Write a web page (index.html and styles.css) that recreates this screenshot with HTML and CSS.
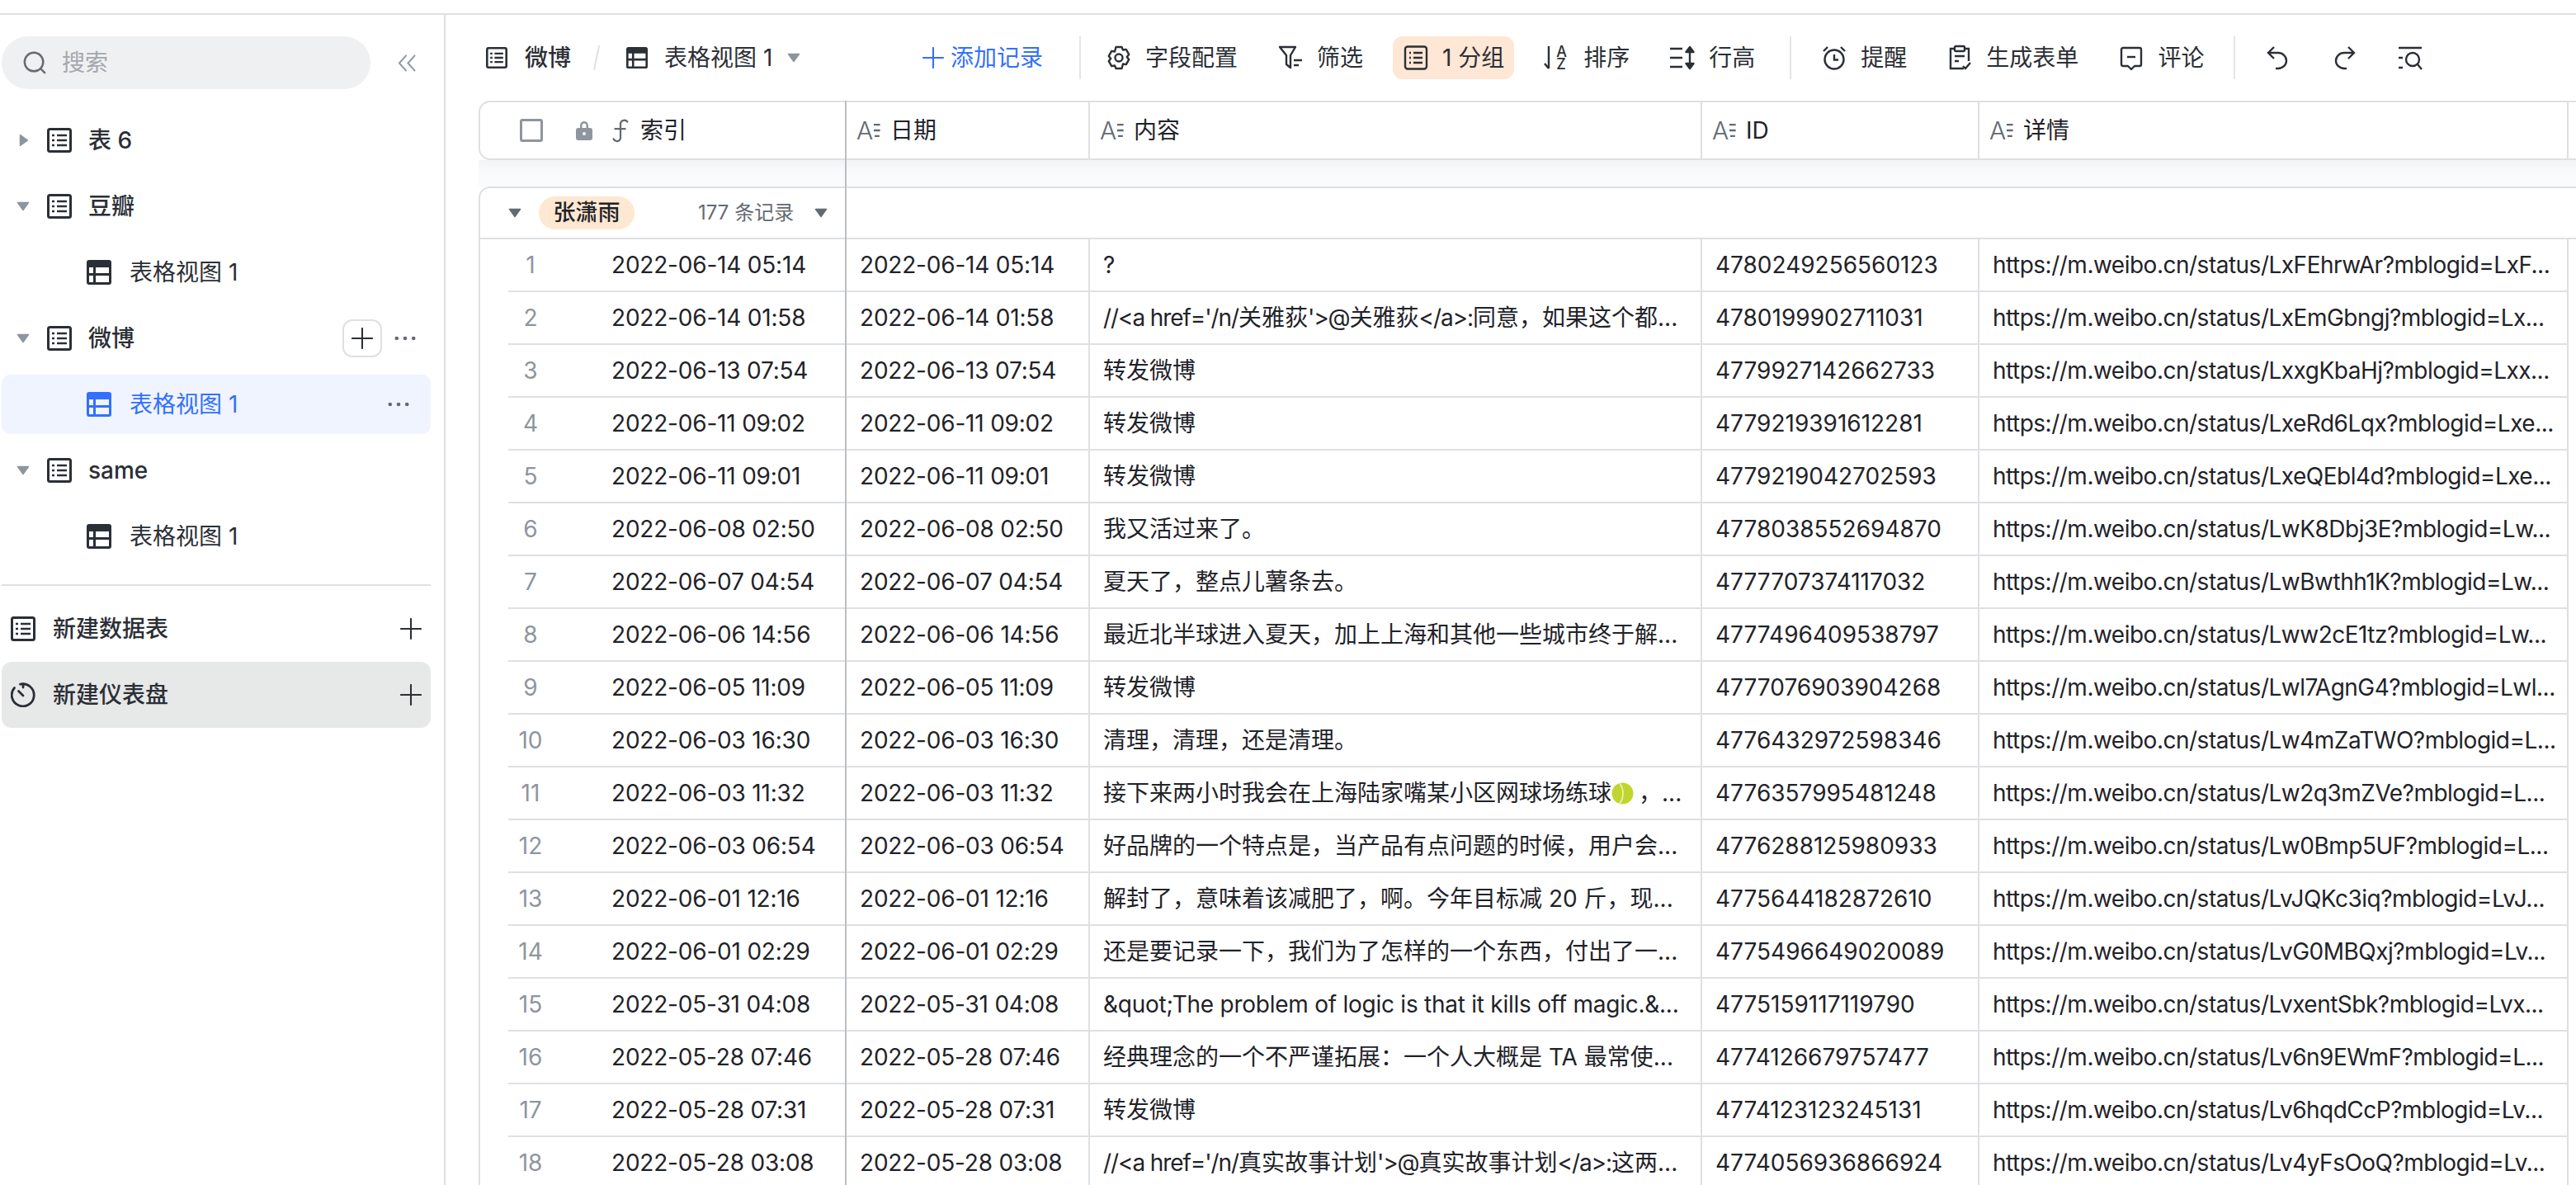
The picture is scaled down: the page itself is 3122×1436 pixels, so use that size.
FILE: index.html
```html
<!DOCTYPE html>
<html lang="zh-CN">
<head>
    <meta charset="UTF-8">
    <title>微博 - 表格视图 1</title>
    <link rel="stylesheet" href="styles.css">
</head>
<body>

    <!-- Icon sprite -->
    <svg class="sprite" xmlns="http://www.w3.org/2000/svg">
        <symbol id="i-sheet" viewBox="0 0 30 30">
            <rect x="1.5" y="1.5" width="27" height="27" rx="2" fill="none" stroke="currentColor" stroke-width="3"/>
            <path d="M6 9h3M12 9h12M6 15h3M12 15h12M6 21h3M12 21h12" stroke="currentColor" stroke-width="2.6" fill="none"/>
        </symbol>
        <symbol id="i-view" viewBox="0 0 30 30">
            <path fill="currentColor" fill-rule="evenodd" d="M3 0h24a3 3 0 0 1 3 3v24a3 3 0 0 1-3 3H3a3 3 0 0 1-3-3V3a3 3 0 0 1 3-3zM3 9v7h5V9zM11 9v7h16V9zM3 19v8h5v-8zM11 19v8h16v-8z"/>
        </symbol>
        <symbol id="i-search" viewBox="0 0 32 32">
            <circle cx="15" cy="15" r="12" fill="none" stroke="currentColor" stroke-width="2.6"/>
            <path d="M24 24l5 5" stroke="currentColor" stroke-width="2.6" stroke-linecap="round"/>
        </symbol>
        <symbol id="i-collapse" viewBox="0 0 24 24">
            <path d="M11 2L2 12l9 10M22 2l-9 10 9 10" fill="none" stroke="currentColor" stroke-width="2"/>
        </symbol>
        <symbol id="i-down" viewBox="0 0 16 12">
            <path d="M1.5 1.5h13L8 10.5z" fill="currentColor" stroke="currentColor" stroke-width="1.5" stroke-linejoin="round"/>
        </symbol>
        <symbol id="i-right" viewBox="0 0 12 16">
            <path d="M1.5 1.5v13l9-6.5z" fill="currentColor" stroke="currentColor" stroke-width="1.5" stroke-linejoin="round"/>
        </symbol>
        <symbol id="i-plus" viewBox="0 0 28 28">
            <path d="M14 1v26M1 14h26" stroke="currentColor" stroke-width="2.2" fill="none" stroke-linecap="round"/>
        </symbol>
        <symbol id="i-more" viewBox="0 0 28 6">
            <circle cx="3" cy="3" r="2.5" fill="currentColor"/>
            <circle cx="14" cy="3" r="2.5" fill="currentColor"/>
            <circle cx="25" cy="3" r="2.5" fill="currentColor"/>
        </symbol>
        <symbol id="i-gauge" viewBox="0 0 30 30">
            <path d="M11.5 2.2A13.5 13.5 0 1 1 4.5 6.5" fill="none" stroke="currentColor" stroke-width="2.8" stroke-linecap="round"/>
            <path d="M15 2v4M9.5 10.500l5.500 5.500" stroke="currentColor" stroke-width="2.8" stroke-linecap="round" fill="none"/>
        </symbol>
        <symbol id="i-gear" viewBox="0 0 32 32">
            <path d="M12.5 3h7L21 6.5l3.800-.6 3.400 6-2.400 3.100 2.400 3.100-3.400 6-3.800-.6L19.500 29h-7L11 25.500l-3.800.6-3.400-6L6.200 17 3.800 13.900l3.400-6 3.800.6z" fill="none" stroke="currentColor" stroke-width="2.4" stroke-linejoin="round"/>
            <circle cx="16" cy="16" r="4.5" fill="none" stroke="currentColor" stroke-width="2.4"/>
        </symbol>
        <symbol id="i-filter" viewBox="0 0 32 32">
            <path d="M3 3h19l-6 10v15l-5-4V13z" fill="none" stroke="currentColor" stroke-width="2.4" stroke-linejoin="round"/>
            <path d="M20 19h10M20 25h6" stroke="currentColor" stroke-width="2.4" fill="none"/>
        </symbol>
        <symbol id="i-group" viewBox="0 0 32 32">
            <rect x="3" y="2.5" width="26" height="27" rx="3" fill="none" stroke="currentColor" stroke-width="2.4"/>
            <path d="M8 10h2M13 10h11M8 16h2M13 16h11M8 22h2M13 22h11" stroke="currentColor" stroke-width="2.4" fill="none"/>
        </symbol>
        <symbol id="i-sortarrow" viewBox="0 0 10 30">
            <path d="M6 1v27M1 22l5 6" stroke="currentColor" stroke-width="2.4" fill="none"/>
        </symbol>
        <symbol id="i-rowh" viewBox="0 0 32 32">
            <path d="M1 5h15M1 16h15M1 27h15" stroke="currentColor" stroke-width="2.6" fill="none"/>
            <path d="M25 4v24M20.500 9L25 3l4.500 6zM20.500 23L25 29l4.500-6z" stroke="currentColor" stroke-width="2.4" fill="currentColor" stroke-linejoin="round"/>
        </symbol>
        <symbol id="i-alarm" viewBox="0 0 32 32">
            <circle cx="16" cy="18" r="11.5" fill="none" stroke="currentColor" stroke-width="2.4"/>
            <path d="M16 12v6.500h5M3 8l5-5M29 8l-5-5" stroke="currentColor" stroke-width="2.4" fill="none"/>
        </symbol>
        <symbol id="i-form" viewBox="0 0 32 32">
            <path d="M21 29H5V5h5M22 5h5v15" fill="none" stroke="currentColor" stroke-width="2.4"/>
            <rect x="10" y="2" width="12" height="6" rx="1.5" fill="none" stroke="currentColor" stroke-width="2.4"/>
            <path d="M10 14h12M10 20h5M20 26l3 3 6-7" stroke="currentColor" stroke-width="2.4" fill="none"/>
        </symbol>
        <symbol id="i-comment" viewBox="0 0 32 32">
            <path d="M6 4h20a2 2 0 0 1 2 2v18a2 2 0 0 1-2 2h-6l-4 4-4-4H6a2 2 0 0 1-2-2V6a2 2 0 0 1 2-2z" fill="none" stroke="currentColor" stroke-width="2.4" stroke-linejoin="round"/>
            <path d="M11 15h10" stroke="currentColor" stroke-width="2.4"/>
        </symbol>
        <symbol id="i-undo" viewBox="0 0 32 32">
            <path d="M11 3L4 10l7 7M5 10h11a10 9.500 0 0 1 0 19h-3" fill="none" stroke="currentColor" stroke-width="2.4"/>
        </symbol>
        <symbol id="i-redo" viewBox="0 0 32 32">
            <path d="M21 3l7 7-7 7M27 10H16a10 9.500 0 0 0 0 19h3" fill="none" stroke="currentColor" stroke-width="2.4"/>
        </symbol>
        <symbol id="i-find" viewBox="0 0 32 32">
            <path d="M2 4h28M2 16h5M2 28h5" stroke="currentColor" stroke-width="2.6" fill="none"/>
            <circle cx="19" cy="18" r="8" fill="none" stroke="currentColor" stroke-width="2.4"/>
            <path d="M25 24l5 6" stroke="currentColor" stroke-width="2.4"/>
        </symbol>
        <symbol id="i-lock" viewBox="0 0 20 24">
            <path fill-rule="evenodd" fill="currentColor" d="M5 9V6a5 5 0 0 1 10 0v3h2a3 3 0 0 1 3 3v9a3 3 0 0 1-3 3H3a3 3 0 0 1-3-3v-9a3 3 0 0 1 3-3zM7.500 9h5V6a2.500 2.500 0 0 0-5 0zM10 14a2 2 0 1 0 0 4 2 2 0 0 0 0-4z"/>
        </symbol>
        <symbol id="i-formula" viewBox="0 0 24 32">
            <path d="M21 5c-2-3-8-3-9 2v19c-1 5-7 5-9 1M5 14h13" fill="none" stroke="currentColor" stroke-width="2.4" stroke-linecap="round"/>
        </symbol>
        <symbol id="i-dashes" viewBox="0 0 8 20">
            <path d="M0 3h8M0 10h8M1 17h6" stroke="currentColor" stroke-width="2.4" fill="none"/>
        </symbol>
    </svg>

    <div class="topline"></div>

    <div class="app">
        <aside class="sidebar">
            <div class="search-row">
                <div class="search">
                    <svg class="ic-search"><use href="#i-search"/></svg>
                    <span>搜索</span>
                </div>
                <svg class="ic-collapse"><use href="#i-collapse"/></svg>
            </div>

            <div class="tree">
                <div class="node">
                    <svg class="caret-right"><use href="#i-right"/></svg>
                    <svg class="ic30"><use href="#i-sheet"/></svg>
                    <span class="node-name">表 6</span>
                </div>
                <div class="node">
                    <svg class="caret"><use href="#i-down"/></svg>
                    <svg class="ic30"><use href="#i-sheet"/></svg>
                    <span class="node-name">豆瓣</span>
                </div>
                <div class="node node-view">
                    <svg class="ic30"><use href="#i-view"/></svg>
                    <span>表格视图 1</span>
                </div>
                <div class="node">
                    <svg class="caret"><use href="#i-down"/></svg>
                    <svg class="ic30"><use href="#i-sheet"/></svg>
                    <span class="node-name">微博</span>
                    <div class="node-actions">
                        <span class="add-btn"><svg class="ic26"><use href="#i-plus"/></svg></span>
                        <svg class="ic-more"><use href="#i-more"/></svg>
                    </div>
                </div>
                <div class="node node-view is-active">
                    <svg class="ic30"><use href="#i-view"/></svg>
                    <span>表格视图 1</span>
                    <svg class="ic-more ic-more-active"><use href="#i-more"/></svg>
                </div>
                <div class="node">
                    <svg class="caret"><use href="#i-down"/></svg>
                    <svg class="ic30"><use href="#i-sheet"/></svg>
                    <span class="node-name">same</span>
                </div>
                <div class="node node-view">
                    <svg class="ic30"><use href="#i-view"/></svg>
                    <span>表格视图 1</span>
                </div>
            </div>

            <div class="new-list">
                <div class="new-item">
                    <svg class="ic30"><use href="#i-sheet"/></svg>
                    <span>新建数据表</span>
                    <svg class="ic26 new-plus"><use href="#i-plus"/></svg>
                </div>
                <div class="new-item is-hover">
                    <svg class="ic30"><use href="#i-gauge"/></svg>
                    <span>新建仪表盘</span>
                    <svg class="ic26 new-plus"><use href="#i-plus"/></svg>
                </div>
            </div>
        </aside>

        <main class="main">
            <div class="toolbar">
                <div class="crumbs">
                    <svg class="ic26"><use href="#i-sheet"/></svg>
                    <span class="crumb-name">微博</span>
                    <span class="crumb-slash"></span>
                    <svg class="ic26"><use href="#i-view"/></svg>
                    <span class="crumb-view">表格视图 1</span>
                    <svg class="crumb-caret"><use href="#i-down"/></svg>
                </div>
                <div class="tool tool-add">
                    <svg class="ic26"><use href="#i-plus"/></svg>
                    <span>添加记录</span>
                </div>
                <span class="sep sep-first"></span>
                <div class="tool"><svg class="ic32"><use href="#i-gear"/></svg><span>字段配置</span></div>
                <div class="tool"><svg class="ic32"><use href="#i-filter"/></svg><span>筛选</span></div>
                <div class="tool tool-on"><svg class="ic32"><use href="#i-group"/></svg><span>1 分组</span></div>
                <div class="tool">
                    <span class="sort-icon">
                        <svg class="sort-arrow"><use href="#i-sortarrow"/></svg>
                        <span class="sort-letters"><span>A</span><span>Z</span></span>
                    </span>
                    <span>排序</span>
                </div>
                <div class="tool"><svg class="ic32"><use href="#i-rowh"/></svg><span>行高</span></div>
                <span class="sep sep-mid"></span>
                <div class="tool"><svg class="ic32"><use href="#i-alarm"/></svg><span>提醒</span></div>
                <div class="tool"><svg class="ic32"><use href="#i-form"/></svg><span>生成表单</span></div>
                <div class="tool"><svg class="ic32"><use href="#i-comment"/></svg><span>评论</span></div>
                <span class="sep"></span>
                <div class="tool-icons">
                    <svg class="ic32"><use href="#i-undo"/></svg>
                    <svg class="ic32"><use href="#i-redo"/></svg>
                    <svg class="ic32"><use href="#i-find"/></svg>
                </div>
            </div>

            <div class="grid">
                <div class="freeze-line"></div>

                <div class="head cols">
                    <div class="hcell hcell-first">
                        <span class="checkbox"></span>
                        <svg class="ic-lock"><use href="#i-lock"/></svg>
                        <svg class="ic-formula"><use href="#i-formula"/></svg>
                        <span>索引</span>
                    </div>
                    <div class="hcell"><span class="field-icon"><span>A</span><svg class="field-dashes"><use href="#i-dashes"/></svg></span><span>日期</span></div>
                    <div class="hcell"><span class="field-icon"><span>A</span><svg class="field-dashes"><use href="#i-dashes"/></svg></span><span>内容</span></div>
                    <div class="hcell"><span class="field-icon"><span>A</span><svg class="field-dashes"><use href="#i-dashes"/></svg></span><span>ID</span></div>
                    <div class="hcell"><span class="field-icon"><span>A</span><svg class="field-dashes"><use href="#i-dashes"/></svg></span><span>详情</span></div>
                </div>
                <div class="head-gap"></div>

                <div class="group">
                    <div class="group-head">
                        <svg class="group-caret"><use href="#i-down"/></svg>
                        <span class="group-tag">张潇雨</span>
                        <span class="group-count">177 条记录</span>
                        <svg class="group-caret group-caret-end"><use href="#i-down"/></svg>
                    </div>

                    <div class="row cols">
                        <div class="cell cell-first"><span class="num">1</span><span class="date">2022-06-14 05:14</span></div>
                        <div class="cell date">2022-06-14 05:14</div>
                        <div class="cell">?</div>
                        <div class="cell">4780249256560123</div>
                        <div class="cell url">https://m.weibo.cn/status/LxFEhrwAr?mblogid=LxF...</div>
                    </div>
                    <div class="row cols">
                        <div class="cell cell-first"><span class="num">2</span><span class="date">2022-06-14 01:58</span></div>
                        <div class="cell date">2022-06-14 01:58</div>
                        <div class="cell"><span><span class="tight">//&lt;a href='/n/</span>关雅荻<span class="tight">'&gt;@</span>关雅荻<span class="tight">&lt;/a&gt;:</span>同意，如果这个都...</span></div>
                        <div class="cell">4780199902711031</div>
                        <div class="cell url">https://m.weibo.cn/status/LxEmGbngj?mblogid=Lx...</div>
                    </div>
                    <div class="row cols">
                        <div class="cell cell-first"><span class="num">3</span><span class="date">2022-06-13 07:54</span></div>
                        <div class="cell date">2022-06-13 07:54</div>
                        <div class="cell">转发微博</div>
                        <div class="cell">4779927142662733</div>
                        <div class="cell url">https://m.weibo.cn/status/LxxgKbaHj?mblogid=Lxx...</div>
                    </div>
                    <div class="row cols">
                        <div class="cell cell-first"><span class="num">4</span><span class="date">2022-06-11 09:02</span></div>
                        <div class="cell date">2022-06-11 09:02</div>
                        <div class="cell">转发微博</div>
                        <div class="cell">4779219391612281</div>
                        <div class="cell url">https://m.weibo.cn/status/LxeRd6Lqx?mblogid=Lxe...</div>
                    </div>
                    <div class="row cols">
                        <div class="cell cell-first"><span class="num">5</span><span class="date">2022-06-11 09:01</span></div>
                        <div class="cell date">2022-06-11 09:01</div>
                        <div class="cell">转发微博</div>
                        <div class="cell">4779219042702593</div>
                        <div class="cell url">https://m.weibo.cn/status/LxeQEbl4d?mblogid=Lxe...</div>
                    </div>
                    <div class="row cols">
                        <div class="cell cell-first"><span class="num">6</span><span class="date">2022-06-08 02:50</span></div>
                        <div class="cell date">2022-06-08 02:50</div>
                        <div class="cell">我又活过来了。</div>
                        <div class="cell">4778038552694870</div>
                        <div class="cell url">https://m.weibo.cn/status/LwK8Dbj3E?mblogid=Lw...</div>
                    </div>
                    <div class="row cols">
                        <div class="cell cell-first"><span class="num">7</span><span class="date">2022-06-07 04:54</span></div>
                        <div class="cell date">2022-06-07 04:54</div>
                        <div class="cell">夏天了，整点儿薯条去。</div>
                        <div class="cell">4777707374117032</div>
                        <div class="cell url">https://m.weibo.cn/status/LwBwthh1K?mblogid=Lw...</div>
                    </div>
                    <div class="row cols">
                        <div class="cell cell-first"><span class="num">8</span><span class="date">2022-06-06 14:56</span></div>
                        <div class="cell date">2022-06-06 14:56</div>
                        <div class="cell">最近北半球进入夏天，加上上海和其他一些城市终于解...</div>
                        <div class="cell">4777496409538797</div>
                        <div class="cell url">https://m.weibo.cn/status/Lww2cE1tz?mblogid=Lw...</div>
                    </div>
                    <div class="row cols">
                        <div class="cell cell-first"><span class="num">9</span><span class="date">2022-06-05 11:09</span></div>
                        <div class="cell date">2022-06-05 11:09</div>
                        <div class="cell">转发微博</div>
                        <div class="cell">4777076903904268</div>
                        <div class="cell url">https://m.weibo.cn/status/Lwl7AgnG4?mblogid=Lwl...</div>
                    </div>
                    <div class="row cols">
                        <div class="cell cell-first"><span class="num">10</span><span class="date">2022-06-03 16:30</span></div>
                        <div class="cell date">2022-06-03 16:30</div>
                        <div class="cell">清理，清理，还是清理。</div>
                        <div class="cell">4776432972598346</div>
                        <div class="cell url">https://m.weibo.cn/status/Lw4mZaTWO?mblogid=L...</div>
                    </div>
                    <div class="row cols">
                        <div class="cell cell-first"><span class="num">11</span><span class="date">2022-06-03 11:32</span></div>
                        <div class="cell date">2022-06-03 11:32</div>
                        <div class="cell"><span>接下来两小时我会在上海陆家嘴某小区网球场练球</span><svg class="tennis" viewBox="0 0 28 28"><circle cx="14" cy="14" r="13.5" fill="#c0d62e"/><path d="M10 1C16 8 16 20 10 27" fill="none" stroke="#eef3c4" stroke-width="1.6"/></svg><span class="ball-rest">，...</span></div>
                        <div class="cell">4776357995481248</div>
                        <div class="cell url">https://m.weibo.cn/status/Lw2q3mZVe?mblogid=L...</div>
                    </div>
                    <div class="row cols">
                        <div class="cell cell-first"><span class="num">12</span><span class="date">2022-06-03 06:54</span></div>
                        <div class="cell date">2022-06-03 06:54</div>
                        <div class="cell">好品牌的一个特点是，当产品有点问题的时候，用户会...</div>
                        <div class="cell">4776288125980933</div>
                        <div class="cell url">https://m.weibo.cn/status/Lw0Bmp5UF?mblogid=L...</div>
                    </div>
                    <div class="row cols">
                        <div class="cell cell-first"><span class="num">13</span><span class="date">2022-06-01 12:16</span></div>
                        <div class="cell date">2022-06-01 12:16</div>
                        <div class="cell">解封了，意味着该减肥了，啊。今年目标减 20 斤，现...</div>
                        <div class="cell">4775644182872610</div>
                        <div class="cell url">https://m.weibo.cn/status/LvJQKc3iq?mblogid=LvJ...</div>
                    </div>
                    <div class="row cols">
                        <div class="cell cell-first"><span class="num">14</span><span class="date">2022-06-01 02:29</span></div>
                        <div class="cell date">2022-06-01 02:29</div>
                        <div class="cell">还是要记录一下，我们为了怎样的一个东西，付出了一...</div>
                        <div class="cell">4775496649020089</div>
                        <div class="cell url">https://m.weibo.cn/status/LvG0MBQxj?mblogid=Lv...</div>
                    </div>
                    <div class="row cols">
                        <div class="cell cell-first"><span class="num">15</span><span class="date">2022-05-31 04:08</span></div>
                        <div class="cell date">2022-05-31 04:08</div>
                        <div class="cell cell-latin">&amp;quot;The problem of logic is that it kills off magic.&amp;...</div>
                        <div class="cell">4775159117119790</div>
                        <div class="cell url">https://m.weibo.cn/status/LvxentSbk?mblogid=Lvx...</div>
                    </div>
                    <div class="row cols">
                        <div class="cell cell-first"><span class="num">16</span><span class="date">2022-05-28 07:46</span></div>
                        <div class="cell date">2022-05-28 07:46</div>
                        <div class="cell">经典理念的一个不严谨拓展：一个人大概是 TA 最常使...</div>
                        <div class="cell">4774126679757477</div>
                        <div class="cell url">https://m.weibo.cn/status/Lv6n9EWmF?mblogid=L...</div>
                    </div>
                    <div class="row cols">
                        <div class="cell cell-first"><span class="num">17</span><span class="date">2022-05-28 07:31</span></div>
                        <div class="cell date">2022-05-28 07:31</div>
                        <div class="cell">转发微博</div>
                        <div class="cell">4774123123245131</div>
                        <div class="cell url">https://m.weibo.cn/status/Lv6hqdCcP?mblogid=Lv...</div>
                    </div>
                    <div class="row cols">
                        <div class="cell cell-first"><span class="num">18</span><span class="date">2022-05-28 03:08</span></div>
                        <div class="cell date">2022-05-28 03:08</div>
                        <div class="cell"><span><span class="tight">//&lt;a href='/n/</span>真实故事计划<span class="tight">'&gt;@</span>真实故事计划<span class="tight">&lt;/a&gt;:</span>这两...</span></div>
                        <div class="cell">4774056936866924</div>
                        <div class="cell url">https://m.weibo.cn/status/Lv4yFsOoQ?mblogid=Lv...</div>
                    </div>
                </div>
            </div>
        </main>
    </div>

</body>
</html>
```
FILE: styles.css
```css
html, body {
    margin: 0;
    padding: 0;
    height: 100%;
    overflow: hidden;
}

body {
    display: flex;
    flex-direction: column;
    background: #ffffff;
    color: #1f2329;
    font-family: Inter, "Noto Sans CJK SC", sans-serif;
    font-size: 28px;
    line-height: 40px;
}

.sprite {
    position: absolute;
    width: 0;
    height: 0;
}

.topline {
    flex: none;
    height: 16px;
    border-bottom: 2px solid #dee0e3;
}

.app {
    flex: 1;
    display: flex;
    min-height: 0;
}

/* Sidebar */
.sidebar {
    flex: none;
    box-sizing: border-box;
    width: 540px;
    border-right: 2px solid #dee0e3;
    padding: 26px 0 0 2px;
    color: #2b2f36;
}

.ic30 { flex: none; width: 30px; height: 30px; }
.ic26 { flex: none; width: 26px; height: 26px; }
.ic32 { flex: none; width: 32px; height: 32px; }

.search-row {
    display: flex;
    align-items: center;
    height: 64px;
}

.search {
    display: flex;
    align-items: center;
    width: 447px;
    height: 64px;
    border-radius: 32px;
    background: #eff0f1;
    color: #a3a8ae;
    padding-left: 25px;
    box-sizing: border-box;
    gap: 18px;
}

.ic-search {
    width: 30px;
    height: 30px;
    color: #646a73;
}

.ic-collapse {
    width: 23px;
    height: 23px;
    margin-left: 33px;
    color: #8f959e;
}

.tree {
    margin-top: 26px;
    width: 520px;
    padding-bottom: 14px;
    border-bottom: 2px solid #dee0e3;
}

.node {
    display: flex;
    align-items: center;
    height: 72px;
    margin-bottom: 8px;
    padding-left: 55px;
    position: relative;
    border-radius: 10px;
}

.node-name {
    margin-left: 20px;
    font-weight: 500;
}

.caret {
    position: absolute;
    left: 18px;
    width: 16px;
    height: 12px;
    color: #8f959e;
}

.caret-right {
    position: absolute;
    left: 21px;
    width: 12px;
    height: 16px;
    color: #8f959e;
}

.node-view {
    padding-left: 103px;
    gap: 22px;
}

.node-view.is-active {
    background: #f0f4ff;
    color: #3370ff;
}

.node-actions {
    margin-left: auto;
    display: flex;
    align-items: center;
    gap: 15px;
    padding-right: 18px;
}

.add-btn {
    display: flex;
    align-items: center;
    justify-content: center;
    width: 44px;
    height: 42px;
    border: 2px solid #dee0e3;
    border-radius: 12px;
}

.ic-more {
    width: 26px;
    height: 6px;
    color: #646a73;
}

.ic-more-active {
    margin-left: auto;
    margin-right: 26px;
}

.new-list {
    width: 520px;
    margin-top: 12px;
}

.new-item {
    display: flex;
    align-items: center;
    height: 80px;
    padding-left: 11px;
    gap: 21px;
    border-radius: 12px;
    font-weight: 500;
}

.new-item.is-hover {
    background: #e7e8e8;
}

.new-plus {
    margin-left: auto;
    margin-right: 11px;
}

/* Toolbar */
.main {
    flex: 1;
    min-width: 0;
    display: flex;
    flex-direction: column;
}

.toolbar {
    flex: none;
    height: 104px;
    display: flex;
    align-items: center;
    gap: 24px;
    padding-left: 49px;
    color: #2b2f36;
}

.crumbs {
    display: flex;
    align-items: center;
    width: 460px;
}

.crumb-name {
    margin-left: 21px;
    font-weight: 500;
}

.crumb-slash {
    width: 2px;
    height: 30px;
    background: #dee0e3;
    margin: 0 35px 0 30px;
    transform: rotate(12deg);
}

.crumb-view {
    margin-left: 20px;
}

.crumb-caret {
    width: 16px;
    height: 12px;
    margin-left: 18px;
    color: #8f959e;
}

.tool {
    display: flex;
    align-items: center;
    gap: 16px;
    height: 52px;
    padding: 0 12px;
    border-radius: 12px;
    white-space: nowrap;
}

.tool-add {
    color: #3370ff;
    gap: 8px;
    margin-left: 33px;
}

.tool-on {
    background: #fee7d5;
}

.sort-icon {
    flex: none;
    display: flex;
    align-items: center;
    width: 32px;
    gap: 5px;
}

.sort-arrow {
    width: 10px;
    height: 30px;
}

.sort-letters {
    display: flex;
    flex-direction: column;
    font-size: 18px;
    line-height: 15px;
    font-weight: 500;
}

.sep {
    flex: none;
    width: 2px;
    height: 52px;
    background: #e4e5e7;
}

.sep-first {
    margin-left: 8px;
    margin-right: -6px;
}

.sep-mid {
    margin-left: 6px;
}

.tool-icons {
    display: flex;
    gap: 48px;
    margin-left: 12px;
}

/* Grid */
.grid {
    flex: 1;
    min-height: 0;
    position: relative;
    padding-left: 40px;
}

.freeze-line {
    position: absolute;
    left: 484px;
    top: 0;
    bottom: 0;
    width: 2px;
    background: #bbbfc4;
    z-index: 2;
}

.cols {
    display: grid;
    grid-template-columns: 444px 295px 742px 336px 714px;
}

.head {
    height: 72px;
    box-sizing: border-box;
    border-top: 2px solid #dee0e3;
    border-bottom: 2px solid #dee0e3;
    border-left: 2px solid #dee0e3;
    border-top-left-radius: 14px;
    border-bottom-left-radius: 14px;
}

.hcell {
    display: flex;
    align-items: center;
    padding-left: 12px;
    border-right: 2px solid #dee0e3;
    gap: 12px;
    white-space: nowrap;
}

.hcell-first {
    padding-left: 48px;
    gap: 0;
}

.checkbox {
    width: 28px;
    height: 28px;
    box-sizing: border-box;
    border: 3px solid #8f959e;
    border-radius: 3px;
}

.ic-lock {
    width: 20px;
    height: 24px;
    margin-left: 40px;
    color: #8f959e;
}

.ic-formula {
    width: 24px;
    height: 30px;
    margin: 0 12px 0 22px;
    color: #646a73;
}

.field-icon {
    flex: none;
    display: flex;
    align-items: center;
    width: 29px;
    font-size: 30px;
    font-weight: 300;
    color: #646a73;
}

.field-dashes {
    width: 8px;
    height: 20px;
    margin-left: 1px;
}

.head-gap {
    height: 32px;
    background: linear-gradient(#f3f4f5, #fafbfc 55%);
}

.group {
    border-top: 2px solid #dee0e3;
    border-left: 2px solid #dee0e3;
    border-top-left-radius: 14px;
}

.group-head {
    display: flex;
    align-items: center;
    width: 444px;
    height: 62px;
    box-sizing: border-box;
    padding-left: 34px;
    border-bottom: 2px solid #dee0e3;
    position: relative;
}

.group-head::after {
    content: "";
    position: absolute;
    left: 444px;
    width: 2200px;
    bottom: -2px;
    height: 2px;
    background: #dee0e3;
}

.group-caret {
    width: 16px;
    height: 12px;
    color: #646a73;
}

.group-caret-end {
    margin-left: 25px;
}

.group-tag {
    margin-left: 21px;
    width: 116px;
    height: 40px;
    line-height: 40px;
    text-align: center;
    border-radius: 20px;
    background: #ffe8d1;
    font-weight: 500;
    font-size: 27px;
}

.group-count {
    margin-left: 77px;
    font-size: 24px;
    color: #646a73;
    white-space: nowrap;
}

.row {
    height: 64px;
    white-space: nowrap;
}

.cell {
    height: 64px;
    box-sizing: border-box;
    display: flex;
    align-items: center;
    padding-left: 16px;
    border-right: 2px solid #dee0e3;
    border-bottom: 2px solid #dee0e3;
    overflow: hidden;
    white-space: pre;
}

.cell-first {
    margin-left: 34px;
    padding-left: 0;
    border-right: 0;
}

.num {
    flex: none;
    width: 30px;
    text-align: center;
    margin-left: 12px;
    color: #8f959e;
}

.cell-first .date {
    margin-left: 83px;
}

.date {
    letter-spacing: -0.2px;
}

.url {
    letter-spacing: -0.5px;
}

.tight {
    letter-spacing: -1.1px;
}

.cell-latin {
    letter-spacing: -0.25px;
}

.tennis {
    flex: none;
    width: 27px;
    height: 27px;
    border-radius: 50%;
}

.ball-rest {
    margin-left: 6px;
}
```
